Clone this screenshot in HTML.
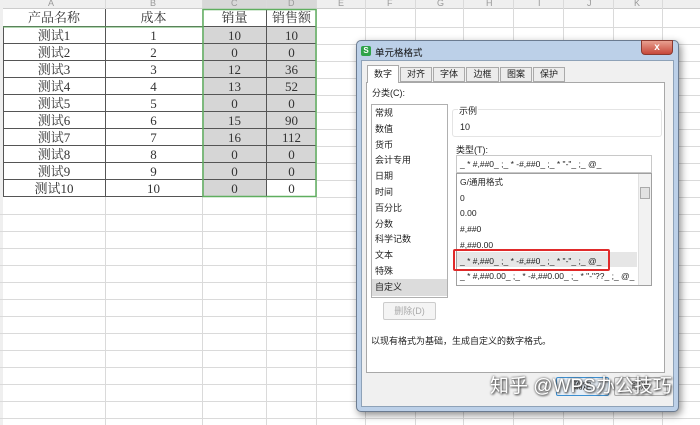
<!DOCTYPE html>
<html><head><meta charset="utf-8"><style>
*{margin:0;padding:0;box-sizing:border-box}
body{width:700px;height:425px;overflow:hidden;background:#fff;position:relative;font-family:"Liberation Serif","Noto Serif CJK SC",serif;}
.a{position:absolute}
.hl{position:absolute;left:0;width:700px;height:1px;background:#dadada}
.vl{position:absolute;top:0;height:425px;width:1px;background:#dadada}
.t{position:absolute;font-size:13px;color:#333;text-align:center;line-height:17px}
.ui{font-family:"Liberation Sans","Noto Sans CJK SC",sans-serif;font-size:9px;color:#222}
</style></head><body>
<div class="a" style="left:0;top:0;width:700px;height:9px;background:#efefef;border-bottom:1px solid #ccc"></div>
<div class="a" style="left:203px;top:0;width:113px;height:9px;background:#d8d8d8"></div>
<div class="a" style="left:0;top:0;width:3px;height:425px;background:#efefef"></div>
<div class="a ui" style="top:-2px;left:48px;color:#999;font-size:9px">A</div>
<div class="a ui" style="top:-2px;left:150px;color:#999">B</div>
<div class="a ui" style="top:-2px;left:231px;color:#999">C</div>
<div class="a ui" style="top:-2px;left:288px;color:#999">D</div>
<div class="a ui" style="top:-2px;left:338px;color:#999">E</div>
<div class="a ui" style="top:-2px;left:387px;color:#999">F</div>
<div class="a ui" style="top:-2px;left:437px;color:#999">G</div>
<div class="a ui" style="top:-2px;left:486px;color:#999">H</div>
<div class="a ui" style="top:-2px;left:538px;color:#999">I</div>
<div class="a ui" style="top:-2px;left:587px;color:#999">J</div>
<div class="a ui" style="top:-2px;left:634px;color:#999">K</div>
<!-- grid -->
<div class="hl" style="top:214px"></div><div class="hl" style="top:231px"></div><div class="hl" style="top:248px"></div><div class="hl" style="top:265px"></div><div class="hl" style="top:282px"></div><div class="hl" style="top:299px"></div><div class="hl" style="top:316px"></div><div class="hl" style="top:333px"></div><div class="hl" style="top:350px"></div><div class="hl" style="top:367px"></div><div class="hl" style="top:384px"></div><div class="hl" style="top:401px"></div><div class="hl" style="top:418px"></div>
<div class="hl" style="top:27px;left:316px"></div><div class="hl" style="top:44px;left:316px"></div><div class="hl" style="top:61px;left:316px"></div><div class="hl" style="top:78px;left:316px"></div><div class="hl" style="top:95px;left:316px"></div><div class="hl" style="top:112px;left:316px"></div><div class="hl" style="top:129px;left:316px"></div><div class="hl" style="top:146px;left:316px"></div><div class="hl" style="top:163px;left:316px"></div><div class="hl" style="top:180px;left:316px"></div><div class="hl" style="top:197px;left:316px"></div>
<div class="vl" style="left:105px"></div><div class="vl" style="left:202px"></div><div class="vl" style="left:266px"></div><div class="vl" style="left:316px"></div><div class="vl" style="left:365px"></div><div class="vl" style="left:415px"></div><div class="vl" style="left:463px"></div><div class="vl" style="left:513px"></div><div class="vl" style="left:563px"></div><div class="vl" style="left:613px"></div><div class="vl" style="left:662px"></div>
<!-- table -->
<div class="a" style="left:203px;top:27px;width:113px;height:170px;background:#d6d6d6"></div>
<div class="a" style="left:267px;top:180px;width:49px;height:17px;background:#fff"></div>
<svg class="a" style="left:0;top:0" width="320" height="200">
<g stroke="#555" stroke-width="1">
<line x1="3" y1="26.5" x2="316" y2="26.5"/><line x1="3" y1="43.5" x2="316" y2="43.5"/><line x1="3" y1="60.5" x2="316" y2="60.5"/><line x1="3" y1="77.5" x2="316" y2="77.5"/><line x1="3" y1="94.5" x2="316" y2="94.5"/><line x1="3" y1="111.5" x2="316" y2="111.5"/><line x1="3" y1="128.5" x2="316" y2="128.5"/><line x1="3" y1="145.5" x2="316" y2="145.5"/><line x1="3" y1="162.5" x2="316" y2="162.5"/><line x1="3" y1="179.5" x2="316" y2="179.5"/><line x1="3" y1="196.5" x2="316" y2="196.5"/>
<line x1="105.5" y1="9" x2="105.5" y2="197"/><line x1="266.5" y1="9" x2="266.5" y2="197"/><line x1="3.5" y1="26" x2="3.5" y2="197"/>
</g>
<rect x="203" y="9.5" width="113" height="187" fill="none" stroke="#5fae5f" stroke-width="1.5"/>
<line x1="3" y1="27" x2="203" y2="27" stroke="#5fae5f" stroke-width="1"/>
</svg>
<div class="t" style="left:3px;top:9px;width:102px">产品名称</div><div class="t" style="left:105px;top:9px;width:97px">成本</div><div class="t" style="left:203px;top:9px;width:63px">销量</div><div class="t" style="left:267px;top:9px;width:49px">销售额</div>
<div class="t" style="left:3px;top:27px;width:102px">测试1</div><div class="t" style="left:105px;top:27px;width:97px">1</div><div class="t" style="left:203px;top:27px;width:63px">10</div><div class="t" style="left:267px;top:27px;width:49px">10</div>
<div class="t" style="left:3px;top:44px;width:102px">测试2</div><div class="t" style="left:105px;top:44px;width:97px">2</div><div class="t" style="left:203px;top:44px;width:63px">0</div><div class="t" style="left:267px;top:44px;width:49px">0</div>
<div class="t" style="left:3px;top:61px;width:102px">测试3</div><div class="t" style="left:105px;top:61px;width:97px">3</div><div class="t" style="left:203px;top:61px;width:63px">12</div><div class="t" style="left:267px;top:61px;width:49px">36</div>
<div class="t" style="left:3px;top:78px;width:102px">测试4</div><div class="t" style="left:105px;top:78px;width:97px">4</div><div class="t" style="left:203px;top:78px;width:63px">13</div><div class="t" style="left:267px;top:78px;width:49px">52</div>
<div class="t" style="left:3px;top:95px;width:102px">测试5</div><div class="t" style="left:105px;top:95px;width:97px">5</div><div class="t" style="left:203px;top:95px;width:63px">0</div><div class="t" style="left:267px;top:95px;width:49px">0</div>
<div class="t" style="left:3px;top:112px;width:102px">测试6</div><div class="t" style="left:105px;top:112px;width:97px">6</div><div class="t" style="left:203px;top:112px;width:63px">15</div><div class="t" style="left:267px;top:112px;width:49px">90</div>
<div class="t" style="left:3px;top:129px;width:102px">测试7</div><div class="t" style="left:105px;top:129px;width:97px">7</div><div class="t" style="left:203px;top:129px;width:63px">16</div><div class="t" style="left:267px;top:129px;width:49px">112</div>
<div class="t" style="left:3px;top:146px;width:102px">测试8</div><div class="t" style="left:105px;top:146px;width:97px">8</div><div class="t" style="left:203px;top:146px;width:63px">0</div><div class="t" style="left:267px;top:146px;width:49px">0</div>
<div class="t" style="left:3px;top:163px;width:102px">测试9</div><div class="t" style="left:105px;top:163px;width:97px">9</div><div class="t" style="left:203px;top:163px;width:63px">0</div><div class="t" style="left:267px;top:163px;width:49px">0</div>
<div class="t" style="left:3px;top:180px;width:102px">测试10</div><div class="t" style="left:105px;top:180px;width:97px">10</div><div class="t" style="left:203px;top:180px;width:63px">0</div><div class="t" style="left:267px;top:180px;width:49px">0</div>
<!-- dialog -->
<div class="a" style="left:356px;top:40px;width:323px;height:372px;background:#bcd0e8;border:1px solid #6b7b90;border-radius:5px;box-shadow:2px 3px 8px rgba(0,0,0,.45)"></div>
<div class="a" style="left:361px;top:60px;width:313px;height:347px;background:#f0f0f0;border:1px solid #8ea2b8"></div>
<div class="a" style="left:361px;top:46px;width:10px;height:10px;background:#2fa34a;border-radius:2px;color:#fff;font:bold 8px/10px 'Liberation Sans';text-align:center">S</div>
<div class="a ui" style="left:375px;top:45px;font-size:9.5px;color:#111">单元格格式</div>
<div class="a" style="left:641px;top:40px;width:32px;height:15px;background:linear-gradient(#e8a090,#c7483a);border:1px solid #8a3a30;border-radius:0 0 4px 4px;color:#fff;font:bold 10px/13px 'Liberation Sans';text-align:center">x</div>
<!-- tabs -->
<div class="a" style="left:366px;top:82px;width:299px;height:291px;background:#fff;border:1px solid #a8a8a8"></div>
<div class="a ui" style="left:400px;top:67px;width:32px;height:15px;border:1px solid #aaa;background:#ececec;text-align:center;line-height:13px">对齐</div>
<div class="a ui" style="left:433px;top:67px;width:32px;height:15px;border:1px solid #aaa;background:#ececec;text-align:center;line-height:13px">字体</div>
<div class="a ui" style="left:466px;top:67px;width:33px;height:15px;border:1px solid #aaa;background:#ececec;text-align:center;line-height:13px">边框</div>
<div class="a ui" style="left:500px;top:67px;width:32px;height:15px;border:1px solid #aaa;background:#ececec;text-align:center;line-height:13px">图案</div>
<div class="a ui" style="left:533px;top:67px;width:32px;height:15px;border:1px solid #aaa;background:#ececec;text-align:center;line-height:13px">保护</div>
<div class="a ui" style="left:367px;top:65px;width:32px;height:18px;border:1px solid #aaa;border-bottom:none;background:#fff;text-align:center;line-height:16px">数字</div>
<div class="a ui" style="left:372px;top:86px">分类(C):</div>
<div class="a" style="left:371px;top:104px;width:77px;height:194px;border:1px solid #b0b0b0;background:#fff"></div>
<div class="a" style="left:372px;top:279px;width:75px;height:17px;background:#dcdcdc"></div>
<div class="a ui" style="left:375px;top:106px;line-height:15.8px">常规<br>数值<br>货币<br>会计专用<br>日期<br>时间<br>百分比<br>分数<br>科学记数<br>文本<br>特殊<br>自定义</div>
<div class="a" style="left:452px;top:109px;width:210px;height:28px;border:1px solid #e4e4e4;border-radius:3px"></div>
<div class="a ui" style="left:458px;top:104px;background:#fff;padding:0 1px">示例</div>
<div class="a ui" style="left:460px;top:122px">10</div>
<div class="a ui" style="left:456px;top:143px">类型(T):</div>
<div class="a ui" style="left:456px;top:155px;width:196px;height:18px;border:1px solid #c8c8c8;padding-left:3px;line-height:16px;font-size:8.5px">_ * #,##0_ ;_ * -#,##0_ ;_ * "-"_ ;_ @_</div>
<div class="a" style="left:456px;top:173px;width:196px;height:113px;border:1px solid #a0a0a0;background:#fff;overflow:hidden">
<div class="a" style="left:0;top:78px;width:180px;height:15px;background:#e6e6e6"></div>
<div class="a ui" style="left:3px;top:1px;line-height:15.7px;font-size:8.5px;white-space:nowrap">G/通用格式<br>0<br>0.00<br>#,##0<br>#,##0.00<br>_ * #,##0_ ;_ * -#,##0_ ;_ * "-"_ ;_ @_<br>_ * #,##0.00_ ;_ * -#,##0.00_ ;_ * "-"??_ ;_ @_</div>
<div class="a" style="left:181px;top:0;width:14px;height:111px;background:#f2f2f2;border-left:1px solid #e0e0e0"></div>
<div class="a" style="left:183px;top:13px;width:10px;height:12px;background:#e2e2e2;border:1px solid #aaa"></div>
</div>
<div class="a" style="left:453px;top:249px;width:157px;height:22px;border:2px solid #e02a2a;border-radius:2px"></div>
<div class="a ui" style="left:383px;top:302px;width:53px;height:18px;border:1px solid #ccc;border-radius:2px;background:#f4f4f4;color:#aaa;text-align:center;line-height:16px">删除(D)</div>
<div class="a ui" style="left:371px;top:334px">以现有格式为基础，生成自定义的数字格式。</div>
<div class="a ui" style="left:556px;top:377px;width:53px;height:19px;border:1px solid #3c8fd0;border-radius:2px;background:#e6eef6;text-align:center;line-height:17px">确定</div>
<div class="a ui" style="left:614px;top:377px;width:53px;height:19px;border:1px solid #aaa;border-radius:2px;background:#ececec;text-align:center;line-height:17px">取消</div>
<div class="a" style="left:490px;top:372px;font:19px/30px 'Liberation Sans','Noto Sans CJK SC',sans-serif;color:#fff;text-shadow:0 0 2px #555,1px 1px 2px #333;white-space:nowrap">知乎 @WPS办公技巧</div>
</body></html>
